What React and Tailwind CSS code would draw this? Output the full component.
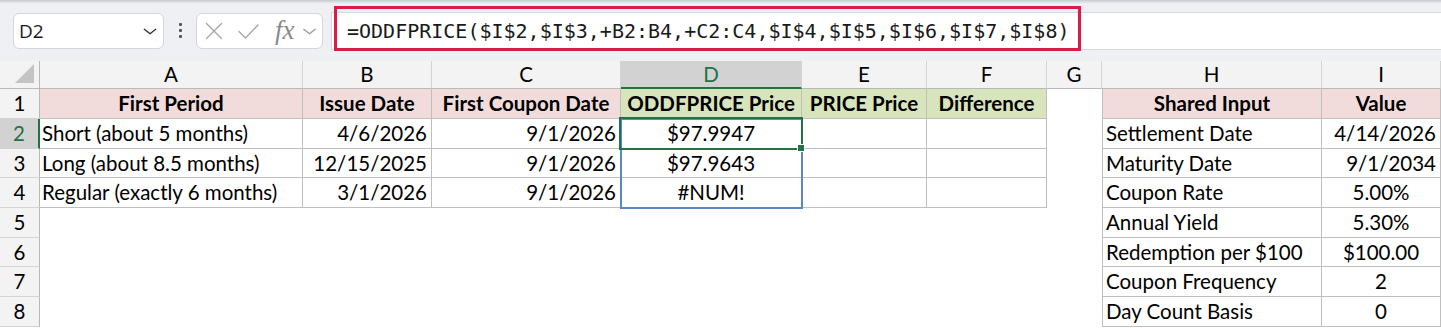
import React from "react";

const CELL_FONT = { fontFamily: "Lato, 'Open Sans', sans-serif" };

function Chevron({ className }) {
  return (
    <svg className={className} viewBox="0 0 16 8" fill="none" stroke="currentColor" strokeWidth="1.6" strokeLinecap="round" strokeLinejoin="round">
      <path d="M1.5 1.5 L8 6.5 L14.5 1.5" />
    </svg>
  );
}

function Toolbar() {
  return (
    <div className="relative h-[61px] bg-[#eef0f3]">
      <div className="h-[3px] bg-gradient-to-b from-[#c6cad0] to-[#e6e9ed]" />
      <div className="flex items-start pt-[10px]">
        <div className="ml-[13px] flex h-[36px] w-[151px] items-center justify-between rounded-[6px] border border-[#d3d6da] bg-white pl-[5px] pr-[6px]">
          <span className="text-[19px] text-[#1a1a1a]" style={{ fontFamily: "'Open Sans', 'Noto Sans', sans-serif" }}>D2</span>
          <Chevron className="h-[7px] w-[14px] text-[#333]" />
        </div>
        <div className="ml-[15px] mt-[10px] flex w-[4px] flex-col gap-[3px]">
          <div className="h-[3px] w-[3px] rounded-[1px] bg-[#555]" />
          <div className="h-[3px] w-[3px] rounded-[1px] bg-[#555]" />
          <div className="h-[3px] w-[3px] rounded-[1px] bg-[#555]" />
        </div>
        <div className="ml-[13px] flex h-[36px] w-[127px] items-center rounded-[6px] border border-[#d3d6da] bg-white pl-[8px]">
          <svg className="h-[18px] w-[18px] text-[#a6a6a6]" viewBox="0 0 18 18" fill="none" stroke="currentColor" strokeWidth="1.4" strokeLinecap="round">
            <path d="M1.5 1.5 L16.5 16.5 M16.5 1.5 L1.5 16.5" />
          </svg>
          <svg className="ml-[15px] h-[15px] w-[21px] text-[#a6a6a6]" viewBox="0 0 21 15" fill="none" stroke="currentColor" strokeWidth="1.4" strokeLinecap="round" strokeLinejoin="round">
            <path d="M1 7.5 L7.5 14 L20 1" />
          </svg>
          <span className="ml-[16px] mt-[-2px] text-[27px] italic leading-none text-[#8a8a8a]" style={{ fontFamily: "'Liberation Serif', serif" }}>fx</span>
          <Chevron className="ml-[7px] h-[7px] w-[15px] text-[#9a9a9a]" />
        </div>
        <div className="ml-[8px] mt-[-1px] flex h-[38px] flex-1 items-center border-y border-l border-[#d5d8dc] bg-white pl-[15px]">
          <span className="text-[20px] text-[#1a1a1a]" style={{ fontFamily: "'DejaVu Sans Mono', monospace" }}>
            =ODDFPRICE($I$2,$I$3,+B2:B4,+C2:C4,$I$4,$I$5,$I$6,$I$7,$I$8)
          </span>
        </div>
      </div>
      <div className="absolute left-[334px] top-[6px] h-[45px] w-[747px] border-[3px] border-[#dc1c48]" />
    </div>
  );
}

const COLS = ["A", "B", "C", "D", "E", "F", "G", "H", "I"];

const PINK = "bg-[#f2dcdb]";
const GREEN = "bg-[#d8e4bc]";
const B = "border-[#bfbfbf]";

function Cell({ children, className = "" }) {
  return (
    <div className={"flex min-w-0 items-center overflow-hidden whitespace-nowrap text-[20.5px] leading-none text-black " + className} style={CELL_FONT}>
      {children}
    </div>
  );
}

function Sheet() {
  const data = [
    ["Short (about 5 months)", "4/6/2026", "9/1/2026", "$97.9947", "Settlement Date", "4/14/2026", "r"],
    ["Long (about 8.5 months)", "12/15/2025", "9/1/2026", "$97.9643", "Maturity Date", "9/1/2034", "r"],
    ["Regular (exactly 6 months)", "3/1/2026", "9/1/2026", "#NUM!", "Coupon Rate", "5.00%", "c"],
  ];
  const lower = [
    ["Annual Yield", "5.30%"],
    ["Redemption per $100", "$100.00"],
    ["Coupon Frequency", "2"],
    ["Day Count Basis", "0"],
  ];

  const rowHdr = (n, active) => (
    <Cell
      key={"rh" + n}
      className={
        "justify-center border-b border-[#d4d4d4] " +
        (active
          ? "border-r-2 border-r-[#217346] bg-[#d2d2d2] text-[#217346]"
          : "border-r border-r-[#b9b9b9] bg-[#f3f3f3]")
      }
    >
      <span className={active ? "text-[#217346]" : ""}>{n}</span>
    </Cell>
  );

  const cells = [];
  cells.push(
    <div key="corner" className="relative border-b border-r border-[#b9b9b9] bg-[#f3f3f3]">
      <div className="absolute bottom-[5px] right-[5px] h-0 w-0 border-b-[19px] border-l-[19px] border-b-[#c4c4c4] border-l-transparent" />
    </div>
  );
  COLS.forEach((c) => {
    const active = c === "D";
    cells.push(
      <Cell
        key={"ch" + c}
        className={
          "justify-center border-r border-r-[#d4d4d4] " +
          (active
            ? "border-b-2 border-b-[#217346] bg-[#d2d2d2] text-[#217346]"
            : "border-b border-b-[#b9b9b9] bg-[#f3f3f3]")
        }
      >
        <span className={active ? "text-[#217346]" : ""}>{c}</span>
      </Cell>
    );
  });

  cells.push(rowHdr(1, false));
  const h1 = [
    ["First Period", PINK],
    ["Issue Date", PINK],
    ["First Coupon Date", PINK],
    ["ODDFPRICE Price", GREEN],
    ["PRICE Price", GREEN],
    ["Difference", GREEN],
  ];
  h1.forEach(([t, bg]) =>
    cells.push(
      <Cell key={"h1" + t} className={"justify-center border-b border-r font-bold " + B + " " + bg}>
        {t}
      </Cell>
    )
  );
  cells.push(<div key="g1" />);
  cells.push(
    <Cell key="h1H" className={"justify-center border-b border-l border-r font-bold " + B + " " + PINK}>Shared Input</Cell>
  );
  cells.push(
    <Cell key="h1I" className={"justify-center border-b border-r font-bold " + B + " " + PINK}>Value</Cell>
  );

  data.forEach((r, i) => {
    const n = i + 2;
    cells.push(rowHdr(n, n === 2));
    cells.push(<Cell key={"a" + n} className={"border-b border-r pl-[2px] " + B}>{r[0]}</Cell>);
    cells.push(<Cell key={"b" + n} className={"justify-end border-b border-r pr-[4px] " + B}>{r[1]}</Cell>);
    cells.push(<Cell key={"c" + n} className={"justify-end border-b border-r pr-[4px] " + B}>{r[2]}</Cell>);
    cells.push(<Cell key={"d" + n} className={"justify-center border-b border-r " + B}>{r[3]}</Cell>);
    cells.push(<Cell key={"e" + n} className={"border-b border-r " + B} />);
    cells.push(<Cell key={"f" + n} className={"border-b border-r " + B} />);
    cells.push(<div key={"g" + n} />);
    cells.push(<Cell key={"h" + n} className={"border-b border-l border-r pl-[3px] " + B}>{r[4]}</Cell>);
    cells.push(
      <Cell key={"i" + n} className={"border-b border-r " + B + " " + (r[6] === "r" ? "justify-end pr-[4px]" : "justify-center")}>
        {r[5]}
      </Cell>
    );
  });

  lower.forEach((r, i) => {
    const n = i + 5;
    cells.push(rowHdr(n, false));
    cells.push(<div key={"blank" + n} className="col-span-7" />);
    cells.push(<Cell key={"h" + n} className={"border-b border-l border-r pl-[3px] " + B}>{r[0]}</Cell>);
    cells.push(<Cell key={"i" + n} className={"justify-center border-b border-r " + B}>{r[1]}</Cell>);
  });

  return (
    <div className="relative">
      <div className="grid grid-cols-[40px_263px_129px_189px_181px_125px_120px_55px_220px_119px] grid-rows-[28px_30px_30px_29px_30px_30px_29px_30px_30px]">
        {cells}
      </div>
      <div className="pointer-events-none absolute left-[620px] top-[57px] h-[91px] w-[183px] border-2 border-[#5b87c9]" />
      <div className="pointer-events-none absolute left-[619px] top-[56px] h-[33px] w-[184px] border-[2px] border-[#217346]" />
      <div className="pointer-events-none absolute left-[797px] top-[83px] h-[8px] w-[8px] border border-white bg-[#217346]" />
    </div>
  );
}

export default function App() {
  return (
    <div className="h-[328px] w-[1441px] overflow-hidden bg-white">
      <Toolbar />
      <Sheet />
    </div>
  );
}
